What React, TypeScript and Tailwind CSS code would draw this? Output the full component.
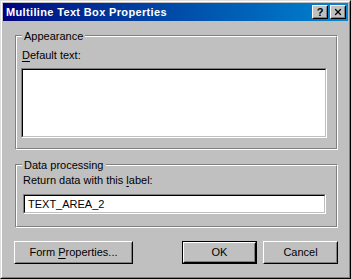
import { X } from 'lucide-react';

const font = { fontFamily: '"Liberation Sans", Arial, sans-serif' };

function Group({
  label,
  height,
  children,
}: {
  label: string;
  height: string;
  children: React.ReactNode;
}) {
  return (
    <div
      className={`relative ml-[12px] w-[323px] ${height} border border-t-[#808080] border-l-[#808080] border-r-white border-b-white`}
    >
      <div className="h-full border border-t-white border-l-white border-r-[#808080] border-b-[#808080]">
        {children}
      </div>
      <span className="absolute left-[6px] -top-[6px] bg-[#c0c0c0] px-[2px] leading-[13px]">
        {label}
      </span>
    </div>
  );
}

function Sunken({ className, children }: { className: string; children?: React.ReactNode }) {
  return (
    <div
      className={`border border-t-[#808080] border-l-[#808080] border-r-white border-b-white ${className}`}
    >
      <div className="h-full border border-t-black border-l-black border-r-[#c0c0c0] border-b-[#c0c0c0] bg-white">
        {children}
      </div>
    </div>
  );
}

function Button({
  label,
  width,
  isDefault,
}: {
  label: React.ReactNode;
  width: string;
  isDefault?: boolean;
}) {
  const face = (
    <div className="h-full border border-t-white border-l-white border-r-black border-b-black">
      <div className="h-full flex items-center justify-center border border-t-[#c0c0c0] border-l-[#c0c0c0] border-r-[#808080] border-b-[#808080] leading-[13px]">
        {label}
      </div>
    </div>
  );
  return (
    <div className={`${width} h-[23px]`}>
      {isDefault ? <div className="h-full border border-black">{face}</div> : face}
    </div>
  );
}

function CaptionButton({ children }: { children: React.ReactNode }) {
  return (
    <div className="w-[16px] h-[14px] bg-[#c0c0c0] border border-t-white border-l-white border-r-black border-b-black">
      <div className="h-full flex items-center justify-center border border-t-[#c0c0c0] border-l-[#c0c0c0] border-r-[#808080] border-b-[#808080] text-black">
        {children}
      </div>
    </div>
  );
}

export default function App() {
  return (
    <div
      className="w-[351px] h-[279px] bg-[#c0c0c0] text-[11px] text-black border border-t-[#dfdfdf] border-l-[#dfdfdf] border-r-black border-b-black"
      style={font}
    >
      <div className="h-full flex flex-col p-px border border-t-white border-l-white border-r-[#808080] border-b-[#808080]">
        {/* Title bar */}
        <div className="h-[18px] flex items-center bg-gradient-to-r from-[#000080] to-[#1084d0] pl-[3px] pr-[2px]">
          <span className="flex-1 text-white font-bold text-[11px] leading-[13px] tracking-[0.35px]">
            Multiline Text Box Properties
          </span>
          <div className="flex gap-[2px]">
            <CaptionButton>
              <span className="font-bold text-[11px] leading-[10px]">?</span>
            </CaptionButton>
            <CaptionButton>
              <X size={10} strokeWidth={3} />
            </CaptionButton>
          </div>
        </div>

        {/* Appearance */}
        <div className="mt-[14px]">
          <Group label="Appearance" height="h-[115px]">
            <div className="pt-[12px] pl-[5px] leading-[13px]">
              <span className="underline underline-offset-2">D</span>efault text:
            </div>
            <Sunken className="mt-[6px] ml-[4px] w-[306px] h-[70px]" />
          </Group>
        </div>

        {/* Data processing */}
        <div className="mt-[14px]">
          <Group label="Data processing" height="h-[64px]">
            <div className="pt-[8px] pl-[6px] leading-[13px]">
              Return data with this <span className="underline underline-offset-2">l</span>abel:
            </div>
            <Sunken className="mt-[7px] ml-[6px] w-[303px] h-[20px]">
              <div className="pl-[3px] leading-[16px]">TEXT_AREA_2</div>
            </Sunken>
          </Group>
        </div>

        {/* Buttons */}
        <div className="mt-[13px] flex items-center pl-[11px]">
          <Button
            width="w-[119px]"
            label={
              <span>
                Form <span className="underline underline-offset-2">P</span>roperties...
              </span>
            }
          />
          <div className="flex-1" />
          <Button width="w-[75px]" label="OK" isDefault />
          <div className="w-[6px]" />
          <Button width="w-[75px]" label="Cancel" />
          <div className="w-[10px]" />
        </div>
      </div>
    </div>
  );
}
